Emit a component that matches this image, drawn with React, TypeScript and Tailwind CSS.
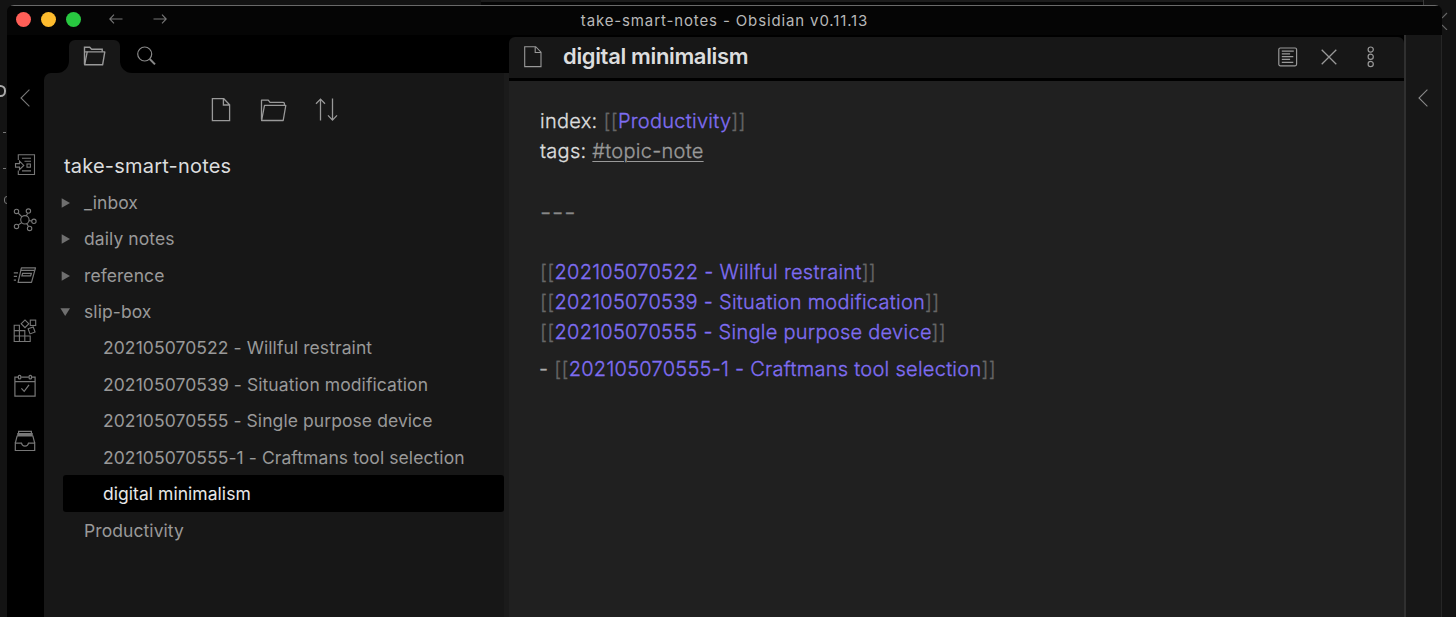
import type { ReactNode } from "react";

type IconProps = { w: number; h: number; className?: string; sw?: number; children: ReactNode };

function Icon({ w, h, className = "", sw = 1.1, children }: IconProps) {
  return (
    <svg
      width={w}
      height={h}
      viewBox={`0 0 ${w} ${h}`}
      fill="none"
      stroke="currentColor"
      strokeWidth={sw}
      className={`block shrink-0 ${className}`}
    >
      {children}
    </svg>
  );
}

const ArrowLeft = () => (
  <Icon w={14} h={10}>
    <path d="M13.5 5H1M5 .7 .8 5 5 9.3" />
  </Icon>
);

const ArrowRight = () => (
  <Icon w={14} h={10}>
    <path d="M.5 5H13M9 .7 13.2 5 9 9.3" />
  </Icon>
);

const Chevron = () => (
  <Icon w={10} h={18} sw={1.1}>
    <path d="M9.4 .7 1 9l8.4 8.3" />
  </Icon>
);

const FolderSmall = () => (
  <Icon w={23} h={20} sw={1.4}>
    <path d="M1.5 18.3V1.3h5.2l1.9 2h10.6v2.5" />
    <path d="M1.6 18.8 4.2 5.9h17.6l-2.2 12.9z" strokeLinejoin="round" />
    <path d="M2 5.9h2.5" />
  </Icon>
);

const FolderLarge = () => (
  <Icon w={27} h={24} sw={1.3}>
    <path d="M1.5 21.5V2.2h6.8L10 4.4h13.2q1.2 0 1.2 1.2v1.8" strokeLinejoin="round" />
    <path d="M1.6 22.5 4.5 7.4h21.3l-2.6 15.1z" strokeLinejoin="round" />
  </Icon>
);

const SearchIcon = () => (
  <Icon w={20} h={20} sw={1.2}>
    <circle cx="7.7" cy="8" r="7" />
    <path d="m12.7 13 5.3 5.4" strokeWidth="2" />
  </Icon>
);

const FileLarge = () => (
  <Icon w={20} h={24} sw={1.3}>
    <path d="M1.4.7h11.4l5.8 6v16H1.4zM12.4.9v6.1h6.1" />
  </Icon>
);

const FileSmall = () => (
  <Icon w={18} h={22} sw={1.1}>
    <path d="M.7.7h11l5.3 5.5v14.4H.7zM11.2.9v5.6h5.7" />
  </Icon>
);

const SortIcon = () => (
  <Icon w={23} h={24} sw={1.3}>
    <path d="M5.5 22.6V1.6M1 5.8l4.5-4.7L10 5.8M17.5.6v21M13 17.4l4.5 4.7 4.5-4.7" />
  </Icon>
);

const PreviewIcon = () => (
  <Icon w={20} h={20} sw={1.2}>
    <rect x=".8" y="1" width="17.8" height="17.8" rx="1.5" />
    <path d="M3.8 4.2h12M3.8 6.9h8.3M3.8 9.6h11.5M3.8 12.4h8.3M3.8 15.3h11.5" />
  </Icon>
);

const CloseIcon = () => (
  <Icon w={16} h={16} sw={1.3}>
    <path d="m.7.7 14.6 14.6M15.3.7.7 15.3" />
  </Icon>
);

const MoreIcon = () => (
  <Icon w={8} h={22} sw={1.2}>
    <circle cx="3.7" cy="3.6" r="2.6" />
    <circle cx="3.7" cy="10.8" r="2.6" />
    <circle cx="3.7" cy="18" r="2.6" />
  </Icon>
);

const SwitcherIcon = () => (
  <Icon w={22} h={24} sw={1.1}>
    <path d="M4.3 7V1.7h16.2v19.8H4.3v-4" />
    <path d="M1.5 10.6h4V8l4.3 4.4-4.3 4.3v-2.6h-4z" />
    <path d="M8 5.3h9M10.5 8.3h6.5M8 17.9h9" />
    <rect x="13" y="11" width="3.4" height="3.2" />
  </Icon>
);

const GraphIcon = () => (
  <Icon w={24} h={24} sw={1.1}>
    <circle cx="11.9" cy="11.8" r="4.2" />
    <circle cx="3.5" cy="3.4" r="2.2" />
    <circle cx="15.4" cy="3.1" r="2.2" />
    <circle cx="20.9" cy="13.3" r="2.2" />
    <circle cx="3.5" cy="18.4" r="2.2" />
    <circle cx="16.6" cy="20.4" r="2.2" />
    <path d="m5 5 4 3.8M14.6 5.2l-1.2 2.6M16 12.6l2.7.4M8.8 14.5l-3.7 2.6M13.7 15.6l1.8 2.8" />
  </Icon>
);

const CardsIcon = () => (
  <Icon w={24} h={20} sw={1.2}>
    <path d="M8.4 2.8h14.1l-4 14.6H5.1z" strokeLinejoin="round" />
    <path d="M7.6 5.4h14M9.6 8.3h8.8l-.8 2.6H8.9z" />
    <path d="M.8 7.8H5M.8 11.4H4M.8 15.1H3" />
  </Icon>
);

const BlocksIcon = () => (
  <Icon w={24} h={24} sw={1.1}>
    <path d="M1.2 6.2h5.2v16.3H1.2zM1.2 11.6h10.6v10.9H1.2M1.2 17h16v5.5h-16" />
    <rect x="17.3" y="1.1" width="5.4" height="5.4" />
    <rect x="9.3" y="2.1" width="5.4" height="5.4" transform="rotate(45 12 4.8)" />
    <rect x="15.9" y="8.7" width="5.4" height="5.4" transform="rotate(-20 18.6 11.4)" />
  </Icon>
);

const CalendarIcon = () => (
  <Icon w={22} h={24} sw={1.2}>
    <path d="M4.4 3.2H.9v19h20.2v-19h-3.6M7.2 3.2h7.6M.9 7.7h20.2" />
    <rect x="4.4" y="1.3" width="2.4" height="3.6" rx="1" />
    <rect x="15.1" y="1.3" width="2.4" height="3.6" rx="1" />
    <path d="m7.4 14.4 2.8 3 4.8-6.6" />
  </Icon>
);

const InboxIcon = () => (
  <Icon w={22} h={22} sw={1.2}>
    <path d="M1.3 13.2h6.2q.6 3 3.5 3t3.5-3h6.2v7.3H1.3z" />
    <path d="M1.3 13.2 3.1 6h15.8l1.8 7.2M3.8 6V3.7h14.4V6M4.6 3.5V1.3h12.8v2.2M4 4.8h14" />
  </Icon>
);

function Triangle({ open }: { open?: boolean }) {
  return (
    <svg width="10" height="10" viewBox="0 0 10 10" className="block fill-[#6f6f6f]">
      {open ? <path d="M.4 1.2h9.6L5.2 9z" /> : <path d="M1.7 .2v9.6L10 5z" />}
    </svg>
  );
}

function Folder({ name, open }: { name: string; open?: boolean }) {
  return (
    <div className="flex h-[36.45px] items-center pl-[16px]">
      <Triangle open={open} />
      <span className="ml-[14px]">{name}</span>
    </div>
  );
}

function Note({ name, active }: { name: string; active?: boolean }) {
  return (
    <div
      className={`ml-[19px] flex items-center pl-[40px] ${
        active
          ? "-mt-px mb-px h-[36.45px] rounded-[3px] bg-black pt-px tracking-[0.04px] text-[#e8e8e8]"
          : "h-[36.45px]"
      }`}
    >
      {name}
    </div>
  );
}

function Link({ children }: { children: ReactNode }) {
  return (
    <>
      <span className="text-[#666]">[[</span>
      <span className="text-[#7f6df2]">{children}</span>
      <span className="text-[#666]">]]</span>
    </>
  );
}

function TitleBar() {
  return (
    <div className="relative flex h-[30px] shrink-0 items-center border-t border-[#6a6a6a] bg-[#050505] pb-[3px] text-[#777]">
      <div className="ml-[9px] flex gap-[10px]">
        <i className="size-[15px] rounded-full bg-[#ff5f57]" />
        <i className="size-[15px] rounded-full bg-[#febc2e]" />
        <i className="size-[15px] rounded-full bg-[#28c840]" />
      </div>
      <div className="ml-[28px] flex gap-[30px]">
        <ArrowLeft />
        <ArrowRight />
      </div>
      <div className="absolute inset-0 flex items-center justify-center pt-px text-[15px] tracking-[0.87px] text-[#b8b8b8]">
        <span>take-smart-notes - Obsidian v0.11.13</span>
      </div>
    </div>
  );
}

function Ribbon() {
  return (
    <div className="flex w-[37px] shrink-0 flex-col items-center bg-black pr-[2px] text-[#777]">
      <div className="mt-[54px] h-[18px]">
        <Chevron />
      </div>
      <div className="mt-[30px] flex flex-col items-center [&>div]:flex [&>div]:h-[55.3px] [&>div]:items-center">
        <div><SwitcherIcon /></div>
        <div><GraphIcon /></div>
        <div><CardsIcon /></div>
        <div><BlocksIcon /></div>
        <div><CalendarIcon /></div>
        <div><InboxIcon /></div>
      </div>
    </div>
  );
}

function Sidebar() {
  return (
    <div className="flex w-[465px] shrink-0 flex-col bg-black">
      <div className="flex h-[38px] shrink-0 pt-[5px] text-[#999]">
        <div className="flex w-[25px] items-end">
          <div className="h-[12px] w-full bg-[#171717]">
            <div className="h-full rounded-br-[12px] bg-black" />
          </div>
        </div>
        <div className="flex w-[51px] justify-center rounded-t-[6px] bg-[#171717] pt-[6px]">
          <FolderSmall />
        </div>
        <div className="flex w-[14px] items-end">
          <div className="h-[12px] w-full bg-[#171717]">
            <div className="h-full rounded-bl-[12px] bg-black" />
          </div>
        </div>
        <div className="ml-[3px] pt-[6px] text-[#888]">
          <SearchIcon />
        </div>
      </div>
      <div className="flex min-h-0 flex-1 flex-col rounded-tl-[7px] border-r-[5px] border-[#1b1b1b] bg-[#171717]">
        <div className="flex h-[74px] shrink-0 items-center gap-[29px] pl-[167px] text-[#999]">
          <FileLarge />
          <FolderLarge />
          <div className="-ml-px"><SortIcon /></div>
        </div>
        <div className="flex h-[37.6px] shrink-0 items-center pl-[20px] text-[20px] tracking-[0.2px] text-[#dcddde]">
          take-smart-notes
        </div>
        <div className="text-[17.5px] tracking-[0.08px] text-[#999]">
          <Folder name="_inbox" />
          <Folder name="daily notes" />
          <Folder name="reference" />
          <Folder name="slip-box" open />
          <Note name="202105070522 - Willful restraint" />
          <Note name="202105070539 - Situation modification" />
          <Note name="202105070555 - Single purpose device" />
          <Note name="202105070555-1 - Craftmans tool selection" />
          <Note name="digital minimalism" active />
          <div className="flex h-[36.45px] items-center pl-[40px]">Productivity</div>
        </div>
      </div>
    </div>
  );
}

function Editor() {
  return (
    <div className="flex min-w-0 flex-1 flex-col bg-black pt-[2px]">
      <div className="flex h-[41px] shrink-0 items-center rounded-t-[6px] bg-[#171717] pb-[2px] pl-[15px] text-[#999]">
        <FileSmall />
        <h1 className="ml-[21px] flex-1 text-[22px] font-semibold tracking-[-0.35px] text-[#dcddde]">digital minimalism</h1>
        <PreviewIcon />
        <div className="ml-[23px]"><CloseIcon /></div>
        <div className="ml-[30px] mr-[29px]"><MoreIcon /></div>
      </div>
      <div className="mt-[3px] flex-1 bg-[#202020] pl-[31px] pt-[25px] text-[20px] font-light leading-[30.2px] tracking-[0.27px] text-[#dcddde] [-webkit-text-stroke:0.3px]">
        <p>index: <Link>Productivity</Link></p>
        <p>tags: <span className="text-[#999] underline decoration-1 underline-offset-[3px]">#topic-note</span></p>
        <p className="mt-[30.2px] text-[25px] leading-[30.2px] tracking-[0.8px] text-[#888]">---</p>
        <p className="mt-[30.2px]"><Link>202105070522 - Willful restraint</Link></p>
        <p><Link>202105070539 - Situation modification</Link></p>
        <p><Link>202105070555 - Single purpose device</Link></p>
        <p className="-ml-px mt-[6px]"><span className="text-[#aaa]">- </span><Link>202105070555-1 - Craftmans tool selection</Link></p>
      </div>
    </div>
  );
}

export default function App() {
  return (
    <div className="relative flex h-[617px] w-[1456px] overflow-hidden bg-[#131313] pl-[7px] pt-[5px] font-['Inter',sans-serif]">
      <div className="absolute left-[481px] top-0 h-[5px] w-[943px] border-r border-[#3a3a3a] bg-[#050505]">
        <div className="h-[2px] bg-[#1c1c1c]" />
      </div>
      <div className="absolute left-0 top-0 h-full w-[7px] overflow-hidden">
        <span className="absolute left-[-5px] top-[85px] h-[12px] w-[11px] rounded-full border-2 border-[#aaa]" />
        <span className="absolute left-[3px] top-[132px] h-px w-[3px] bg-[#777]" />
        <span className="absolute left-[3px] top-[168px] h-px w-[3px] bg-[#777]" />
        <span className="absolute left-[4px] top-[196px] h-[8px] w-[6px] rounded-full border border-[#777]" />
      </div>
      <div className="absolute left-[1442px] top-[12px] text-[#666]">
        <Icon w={6} h={18}><path d="M5 1 0 6M0 13l5 5" /></Icon>
      </div>
      <div className="relative flex w-[1435px] flex-col overflow-hidden rounded-t-[7px] bg-[#050505]">
        <TitleBar />
        <div className="flex min-h-0 flex-1">
          <Ribbon />
          <Sidebar />
          <Editor />
          <div className="flex w-[38px] shrink-0 justify-center border-l-2 border-r border-l-[#303030] border-r-[#262626] bg-[#171717] pr-px pt-[54px] text-[#888]">
            <Chevron />
          </div>
        </div>
      </div>
    </div>
  );
}
